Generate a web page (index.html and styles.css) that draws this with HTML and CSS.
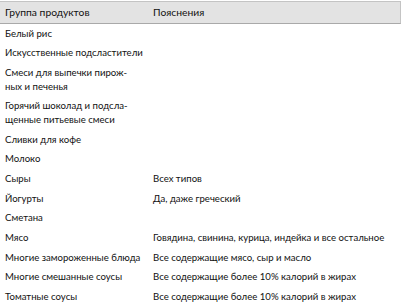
FILE: index.html
```html
<!DOCTYPE html>
<html lang="ru">
<head>
<meta charset="utf-8">
<link rel="stylesheet" href="styles.css">
</head>
<body>
<div class="table">
  <div class="row head">
    <div class="c1">Группа продуктов</div>
    <div class="c2">Пояснения</div>
  </div>
  <div class="row"><div class="c1">Белый рис</div><div class="c2"></div></div>
  <div class="row"><div class="c1">Искусственные подсластители</div><div class="c2"></div></div>
  <div class="row"><div class="c1">Смеси для выпечки пирож-<br>ных и печенья</div><div class="c2"></div></div>
  <div class="row"><div class="c1">Горячий шоколад и подсла-<br>щенные питьевые смеси</div><div class="c2"></div></div>
  <div class="row"><div class="c1">Сливки для кофе</div><div class="c2"></div></div>
  <div class="row"><div class="c1">Молоко</div><div class="c2"></div></div>
  <div class="row"><div class="c1">Сыры</div><div class="c2">Всех типов</div></div>
  <div class="row"><div class="c1">Йогурты</div><div class="c2">Да, даже греческий</div></div>
  <div class="row"><div class="c1">Сметана</div><div class="c2"></div></div>
  <div class="row"><div class="c1">Мясо</div><div class="c2">Говядина, свинина, курица, индейка и все остальное</div></div>
  <div class="row"><div class="c1">Многие замороженные блюда</div><div class="c2">Все содержащие мясо, сыр и масло</div></div>
  <div class="row"><div class="c1">Многие смешанные соусы</div><div class="c2">Все содержащие более 10% калорий в жирах</div></div>
  <div class="row"><div class="c1">Томатные соусы</div><div class="c2">Все содержащие более 10% калорий в жирах</div></div>
</div>
</body>
</html>
```
FILE: styles.css
```css
html, body {
  margin: 0;
  padding: 0;
  background: #fff;
}
body {
  font-family: Lato, "Noto Sans", sans-serif;
  font-size: 9.6px;
  color: #111;
}
.table {
  width: 401px;
  padding-top: 1px;
}
.row {
  display: grid;
  grid-template-columns: 148px 1fr;
  padding: 3px 0 3.1px 5px;
  line-height: 13.6px;
  white-space: nowrap;
}
.head {
  font-size: 10.3px;
  background: #e3e3e3;
  border: 1px solid #c4c4c4;
  border-bottom-color: #a9a9a9;
  border-left: none;
  padding: 3.5px 0 3.5px 5px;
}
```
